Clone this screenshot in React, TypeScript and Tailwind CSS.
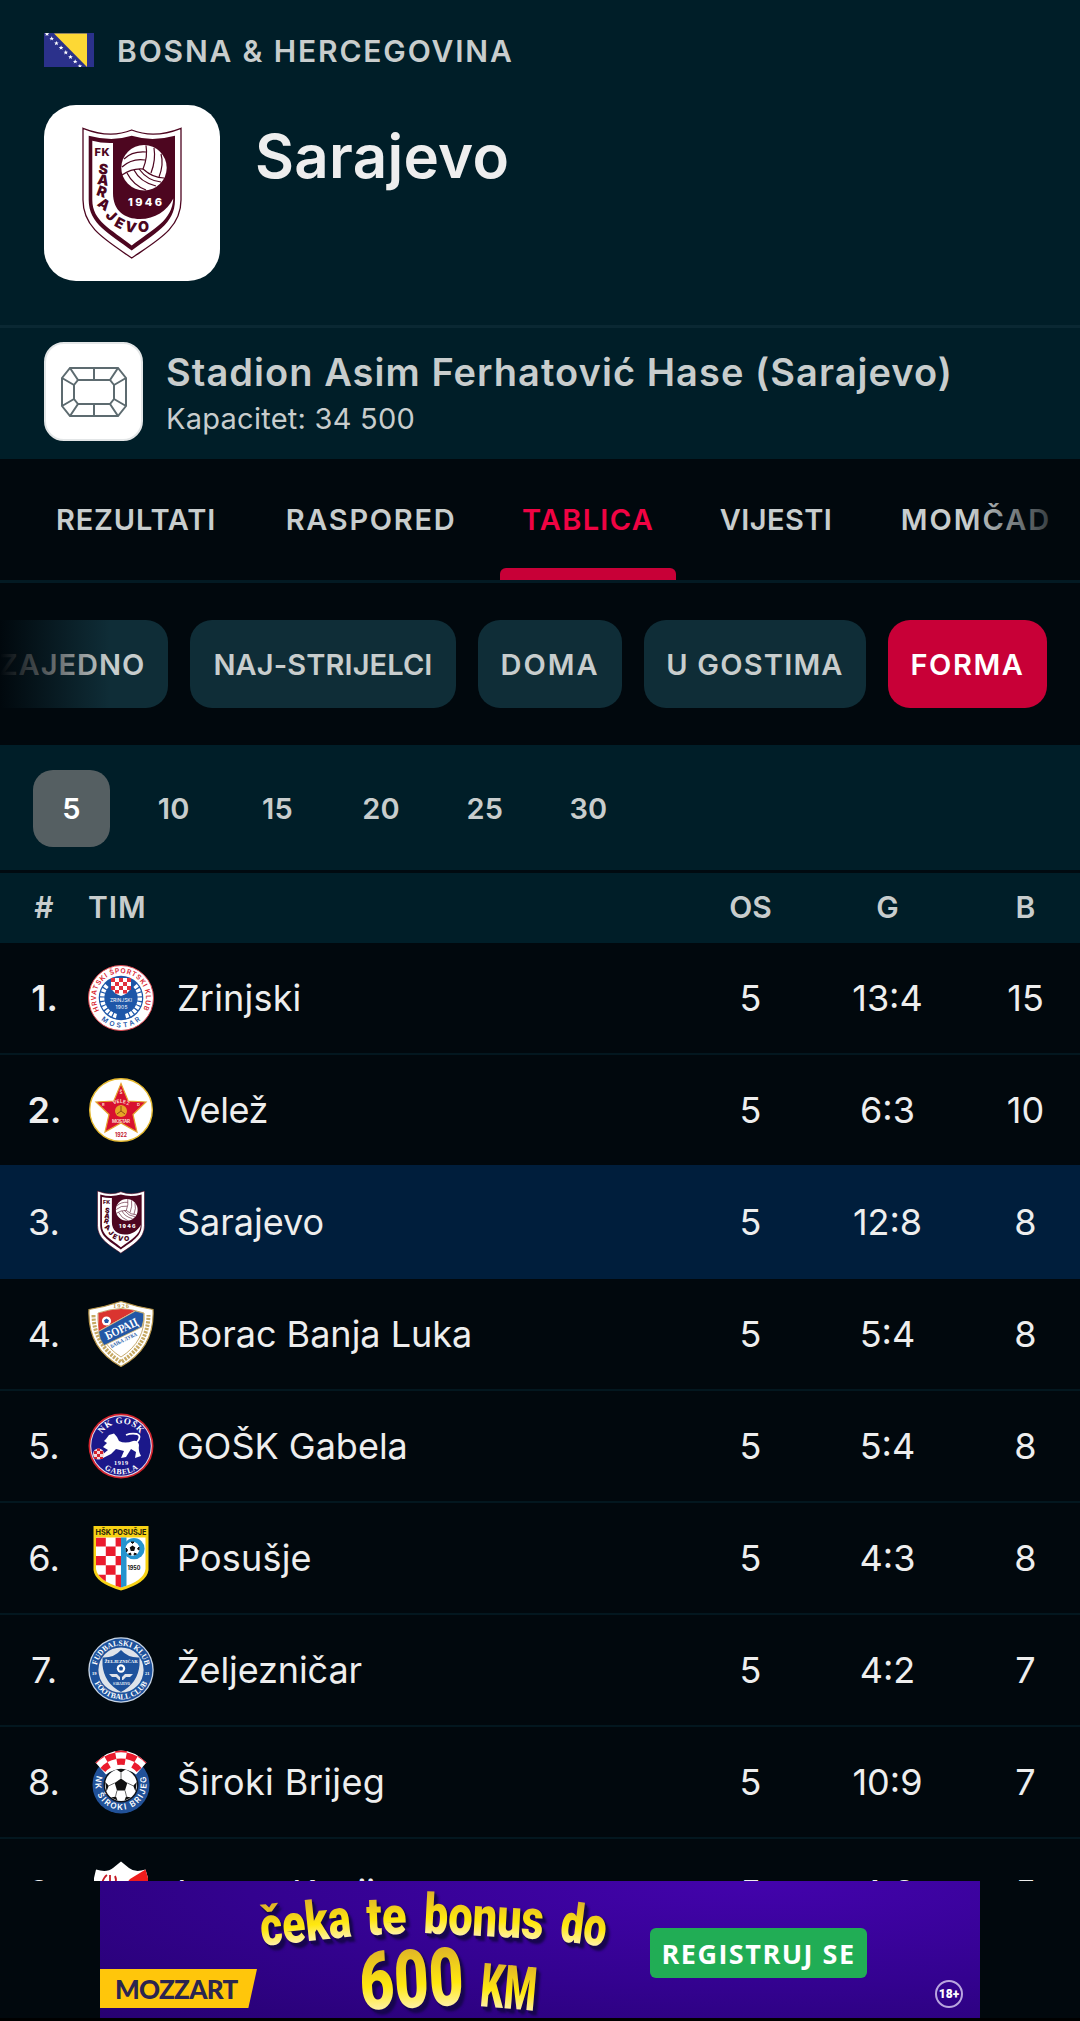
import { useState, type ReactNode } from "react";

type Team = {
  rank: number;
  name: string;
  played: number;
  goals: string;
  points: number;
  crest: ReactNode;
  tracking?: string;
};

const tabs = [
  { label: "REZULTATI", width: "w-[212px]", tracking: "tracking-[0.8px]" },
  { label: "RASPORED", width: "w-[214px]", tracking: "tracking-[1.7px]" },
  { label: "TABLICA", width: "w-[176px]", tracking: "tracking-[1.3px]" },
  { label: "VIJESTI", width: "w-[156px]", tracking: "tracking-[0.4px]" },
  { label: "MOMČAD", width: "w-[200px]", tracking: "tracking-[2px]" },
];

const filters = [
  { label: "ZAJEDNO", width: "w-[192px]", tracking: "tracking-[1px]" },
  { label: "NAJ-STRIJELCI", width: "w-[266px]", tracking: "tracking-[0.1px]" },
  { label: "DOMA", width: "w-[144px]", tracking: "tracking-[2px]" },
  { label: "U GOSTIMA", width: "w-[222px]", tracking: "tracking-[1.2px]" },
  { label: "FORMA", width: "w-[159px]", tracking: "tracking-[1.6px]" },
];

const formLengths = [5, 10, 15, 20, 25, 30];

function Flag() {
  return (
    <svg viewBox="0 0 50 34" className="h-[34px] w-[50px] shrink-0">
      <rect width="50" height="34" fill="#2b318b" />
      <path d="M10 0.5H43V34Z" fill="#fdd835" />
      {[0, 1, 2, 3, 4, 5, 6, 7].map((i) => (
        <path
          key={i}
          d="M0 -2.3L0.7 -0.7L2.3 -0.7L1 0.4L1.5 2L0 1L-1.5 2L-1 0.4L-2.3 -0.7L-0.7 -0.7Z"
          transform={`translate(${3 + i * 4.7} ${1 + i * 4.6})`}
          fill="#fff"
        />
      ))}
    </svg>
  );
}

function SarajevoCrest({ className }: { className: string }) {
  return (
    <svg viewBox="0 0 100 132" className={className} fontFamily="Inter, sans-serif" fontWeight="800">
      <path
        d="M1 1.3Q28 12 49.7 3Q72 12 99 1.3V73C99 101 76 113 49.7 131C24 113 1 101 1 73Z"
        fill="#fff"
        stroke="#4d0620"
        strokeWidth="1.3"
      />
      <path
        d="M6.7 8.7Q30 15 49.7 8.8Q70 15 93 8.7V73C93 97 72 107 49.7 123.5C28 107 6.7 97 6.7 73Z"
        fill="#4d0620"
      />
      <path
        d="M10.3 13.7Q20 16.5 31 16V66C31 84 43 92 58 92C73 92 85 84 91.3 71.5C90 94 71 102 49.7 118.5C29 102 10.3 94 10.3 73Z"
        fill="#fff"
      />
      <circle cx="62" cy="40.8" r="22.7" fill="#fff" />
      <g fill="none" stroke="#4d0620" strokeWidth="1.2">
        <path d="M64 18.5Q66 30 61 42Q71 51 82 51" />
        <path d="M72 21Q74 33 69 46" />
        <path d="M79 27Q82 37 77 50" />
        <path d="M61 42Q50 41 40 48" />
        <path d="M64 25Q50 24 42 32" />
        <path d="M63 33Q50 31 40 40" />
        <path d="M52 43Q58 55 74 59" />
        <path d="M45 46Q51 58 64 63" />
        <path d="M57 42Q66 54 79 55" />
      </g>
      <text x="46" y="79" fontSize="11" fill="#fff" textLength="34">1946</text>
      <text x="12.5" y="28.5" fontSize="11" fill="#4d0620" textLength="15">FK</text>
      <text
        x="16 14.8 13.8 14.5 22.8 31.4 42 56"
        y="46.4 57 67.8 78 89 98.6 103.4 105"
        rotate="8 10 20 36 45 28 15 0"
        fontSize="14.2"
        fontWeight="900"
        fill="#4d0620"
      >
        SARAJEVO
      </text>
    </svg>
  );
}

function ZrinjskiCrest() {
  return (
    <svg viewBox="0 0 66 66" className="size-[66px]" fontFamily="Inter, sans-serif" fontWeight="600">
      <defs>
        <path id="zrinjski-top" d="M11.3 45.5A25 25 0 1 1 54.7 45.5" />
        <path id="zrinjski-bottom" d="M10.4 52A29.7 29.7 0 0 0 55.6 52" />
      </defs>
      <circle cx="33" cy="33" r="32.5" fill="#fff" stroke="#d9464e" />
      <circle cx="33" cy="33" r="22.3" fill="#1d56a8" />
      <text fontSize="6.8" fill="#d8232f">
        <textPath href="#zrinjski-top" textLength="103">HRVATSKI ŠPORTSKI KLUB</textPath>
      </text>
      <text fontSize="6.8" fill="#1d56a8">
        <textPath href="#zrinjski-bottom" startOffset="4" textLength="43">MOSTAR</textPath>
      </text>
      <path
        d="M19 20.5A18.6 18.6 0 0 0 29 51.2M47 20.5A18.6 18.6 0 0 1 37 51.2"
        fill="none"
        stroke="#fff"
        strokeWidth="4.4"
        strokeDasharray="3.2 1.2"
      />
      <path d="M23 13H43V23Q41 28 33 31Q25 28 23 23Z" fill="#fff" />
      <g fill="#e0303c">
        <path d="M23 13h4v4h-4zM31 13h4v4h-4zM39 13h4v4h-4zM27 17h4v4h-4zM35 17h4v4h-4z" />
        <path d="M23 21h4v4h-4zM31 21h4v4h-4zM39 21h4v4h-4zM27 25h4v3.5h-4zM35 25h4v3.5h-4z" />
      </g>
      <text x="22" y="36.5" fontSize="5" fontWeight="400" fill="#fff" textLength="22">ZRINJSKI</text>
      <text x="27.5" y="43.5" fontSize="5" fontWeight="400" fill="#fff" textLength="12">1905</text>
    </svg>
  );
}

function VelezCrest() {
  return (
    <svg viewBox="0 0 66 66" className="size-[66px]" fontFamily="Inter, sans-serif" fontWeight="700">
      <circle cx="33" cy="33" r="31.3" fill="#fff" stroke="#e5b92f" strokeWidth="1.4" />
      <path
        d="M33 6.5L40.2 24L58 25L45 37.5L49 55L33 46L17 55L21 37.5L8 25L25.8 24Z"
        fill="#d8102f"
        stroke="#e5a52f"
        strokeWidth="1.2"
      />
      <circle cx="33" cy="34" r="6" fill="#e6a326" />
      <path d="M33 29V34L37 37M33 34L29 37" stroke="#8f4a12" fill="none" />
      <text
        x="25.5 28.7 32 34.8 38"
        y="27.5 26.3 25.8 26.2 27.4"
        rotate="-18 -8 0 8 16"
        fontSize="4.8"
        fill="#fbd7c8"
      >
        VELEŽ
      </text>
      <text x="24" y="46.3" fontSize="4.6" fill="#fbd7c8" textLength="18">MOSTAR</text>
      <text x="31.5" y="16.5" fontSize="4.5" fill="#fbd7c8">Š</text>
      <text x="14" y="29" fontSize="4" fill="#fbd7c8">R</text>
      <text x="49" y="29" fontSize="4" fill="#fbd7c8">D</text>
      <text x="27" y="60" fontSize="6.4" fill="#c2182f" textLength="12" lengthAdjust="spacingAndGlyphs">1922</text>
    </svg>
  );
}

function BoracCrest() {
  return (
    <svg viewBox="0 0 66 66" className="size-[66px]" fontFamily="Liberation Serif, serif" fontWeight="700">
      <path
        d="M1 8.5Q17 6 33 0.5Q49 6 65 8.5Q67 47 33 65.5Q-1 47 1 8.5Z"
        fill="#fff"
        stroke="#b9974b"
        strokeWidth="1.2"
      />
      <path d="M5.5 14Q6 44 33 61Q60 44 60.5 14" fill="none" stroke="#c6a862" strokeWidth="4" strokeDasharray="2.2 1.2" />
      <path d="M10 12Q22 8 33 7.5Q44 8 56 12Q58 40 33 56Q8 40 10 12Z" fill="#fff" stroke="#b9974b" strokeWidth="0.8" />
      <path d="M10.4 12.2Q22 8.4 33 8Q40 8.2 47 9.7L10.5 30Z" fill="#da3430" />
      <path d="M10.6 30.5L47.5 10L55.8 12.3Q56.3 19 54 26L16 44.5Q11 38 10.6 30.5Z" fill="#2257a6" stroke="#d3b66c" strokeWidth="0.8" />
      <circle cx="18.5" cy="20" r="4.6" fill="#fff" />
      <path d="M18.5 17.5L21 19.3L20 22H17L16 19.3Z" fill="#2257a6" />
      <text x="25" y="6.5" fontSize="6.5" fill="#b9974b" textLength="16">1926</text>
      <g transform="rotate(-26 33 28)">
        <text x="16" y="32" fontSize="12" fill="#fff" textLength="35" lengthAdjust="spacingAndGlyphs">БОРАЦ</text>
        <text x="16" y="41" fontSize="5.5" fill="#2257a6" textLength="29" lengthAdjust="spacingAndGlyphs">БАЊА ЛУКА</text>
      </g>
    </svg>
  );
}

function GoskCrest() {
  return (
    <svg viewBox="0 0 66 66" className="size-[66px]" fontFamily="Liberation Serif, serif" fontWeight="700">
      <defs>
        <path id="gosk-top" d="M12.5 23.5A22.6 22.6 0 0 1 53.5 23.5" />
        <path id="gosk-bottom" d="M12 52A28.3 28.3 0 0 0 54 52" />
      </defs>
      <circle cx="33" cy="33" r="32.5" fill="#d2222d" />
      <circle cx="33" cy="33" r="30.8" fill="#e4e0ee" />
      <circle cx="33" cy="33" r="29.8" fill="#1b188a" />
      <text fontSize="9" fill="#fff">
        <textPath href="#gosk-top" startOffset="3" textLength="45">NK GOŠK</textPath>
      </text>
      <text fontSize="7.8" fill="#fff">
        <textPath href="#gosk-bottom" startOffset="6" textLength="36">GABELA</textPath>
      </text>
      <path
        d="M18 26L21 22L26 20.5L29 24L31 28Q37 31 45 28Q50 27 51 32Q50 38 53 43L47 45L48 39L43 36L38 44L33 45L36 38L28 36L23 41L15 45L14 42L20 37L15 34L19 30L16 28Z"
        fill="#fff"
      />
      <path d="M49 29Q54 23 49 21Q43 20 38 22" fill="none" stroke="#fff" strokeWidth="1.8" />
      <circle cx="10.5" cy="41" r="5.5" fill="#f3d5d8" />
      <path d="M6 38h3v3H6zM12 38h3v3h-3zM9 35.5h3V38H9zM9 41h3v3H9zM6 44h3v2H6zM12 44h3v2h-3z" fill="#d2222d" />
      <text x="26" y="51.5" fontSize="6.2" fill="#fff" textLength="14">1919</text>
    </svg>
  );
}

function PosusjeCrest() {
  return (
    <svg viewBox="0 0 66 66" className="size-[66px]" fontFamily="Inter, sans-serif" fontWeight="700">
      <defs>
        <clipPath id="posusje-shield">
          <path d="M8 12.5H57.5V44Q56 56 33 62.5Q10 56 8 44Z" />
        </clipPath>
      </defs>
      <path d="M5.5 1H60.5V45Q59 58 33 65.5Q7 58 5.5 45Z" fill="#f8d214" />
      <g clipPath="url(#posusje-shield)">
        <rect x="8" y="12" width="50" height="52" fill="#fff" />
        <path
          d="M8 12.5h9.8v9H8zM27.6 12.5h5.4v9h-5.4zM17.8 21.5h9.8v9.4h-9.8zM8 30.9h9.8v9.4H8zM27.6 30.9h5.4v9.4h-5.4zM17.8 40.3h9.8v9.4h-9.8zM8 49.7h9.8v12H8zM27.6 49.7h5.4v14h-5.4z"
          fill="#ea1b2d"
        />
        <rect x="33" y="12" width="5.5" height="52" fill="#2594cf" />
      </g>
      <circle cx="46" cy="23.7" r="10.6" fill="#2594cf" />
      <circle cx="44.5" cy="23.7" r="7" fill="#fff" />
      <path d="M44.5 20.5L47.3 22.6L46.2 26H42.8L41.7 22.6Z" fill="#111" />
      <path d="M43 17l3 0-1.5 1.5zM38 23l1.5 2-1 2zM51 22l0 3-1.5-1zM40.5 29l2-1 .5 2zM48.5 29l-2-1-.5 2z" fill="#111" stroke="#111" />
      <text x="7.5" y="10" fontSize="8" fill="#26220c" textLength="51" lengthAdjust="spacingAndGlyphs">HŠK POSUŠJE</text>
      <text x="39.5" y="45.3" fontSize="5.6" fill="#111" textLength="13" lengthAdjust="spacingAndGlyphs">1950</text>
    </svg>
  );
}

function ZeljeznicarCrest() {
  return (
    <svg viewBox="0 0 66 66" className="size-[66px]" fontFamily="Liberation Serif, serif" fontWeight="700">
      <defs>
        <path id="zeljo-top" d="M8.9 28.7A24.5 24.5 0 0 1 57.1 28.7" />
        <path id="zeljo-bottom" d="M6.2 45A29.4 29.4 0 0 0 59.8 45" />
      </defs>
      <circle cx="33" cy="33" r="32.7" fill="#c9d6e6" />
      <circle cx="33" cy="33" r="31.4" fill="#1e529c" />
      <circle cx="33" cy="33" r="22.6" fill="#dfe3ea" />
      <path d="M14.5 20.5Q26 21 33 13Q40 21 51.5 20.5V28Q50 46 33 55Q16 46 14.5 28Z" fill="#1e529c" />
      <text fontSize="7.8" fill="#fff">
        <textPath href="#zeljo-top" startOffset="0.5" textLength="67" lengthAdjust="spacingAndGlyphs">FUDBALSKI KLUB</textPath>
      </text>
      <text fontSize="7.8" fill="#fff">
        <textPath href="#zeljo-bottom" startOffset="1" textLength="65" lengthAdjust="spacingAndGlyphs">FOOTBALL CLUB</textPath>
      </text>
      <text x="16.5" y="25.5" fontSize="4.8" fill="#fff" textLength="33" lengthAdjust="spacingAndGlyphs">ŽELJEZNIČAR</text>
      <circle cx="33" cy="31.5" r="4.2" fill="#fff" />
      <path d="M33 29.2L35.2 30.8L34.4 33.4H31.6L30.8 30.8Z" fill="#1e529c" />
      <path d="M21 37H29L32 40V43H31L28 40H24zM45 37H37L34 40V43H35L38 40H42z" fill="#dfe3ea" />
      <text x="25" y="47.5" fontSize="3.2" fill="#fff" textLength="17">SARAJEVO</text>
      <text x="4" y="37.5" fontSize="4.5" fill="#fff">19</text>
      <text x="57" y="37.5" fontSize="4.5" fill="#fff">21</text>
    </svg>
  );
}

function SirokiCrest() {
  return (
    <svg viewBox="0 0 66 66" className="size-[66px]" fontFamily="Inter, sans-serif" fontWeight="600">
      <defs>
        <path id="siroki-ring" d="M10.5 23A25.6 25.6 0 1 0 55.5 23" />
        <clipPath id="siroki-fan">
          <path d="M7.5 13.5Q33 -10.5 58.5 13.5L48 25.5Q33 14.5 18 25.5Z" />
        </clipPath>
      </defs>
      <circle cx="33" cy="36" r="28.5" fill="#215198" />
      <circle cx="33" cy="36" r="17.5" fill="#10141c" />
      {/* rings of checks share one centre, so the columns stay radial */}
      <g clipPath="url(#siroki-fan)">
        <rect width="66" height="28" fill="#fff" />
        <g fill="none" stroke="#ea1b2d" strokeWidth="6.4">
          <path d="M5.2 12.9A36.5 36.5 0 0 1 60.8 12.9" pathLength="5" strokeDasharray="1 1" />
          <path d="M10 17A30.1 30.1 0 0 1 56 17" pathLength="5" strokeDasharray="1 1" strokeDashoffset="1" />
          <path d="M14.9 21A23.7 23.7 0 0 1 51.1 21" pathLength="5" strokeDasharray="1 1" />
        </g>
      </g>
      <circle cx="33" cy="36" r="16" fill="#fff" />
      <path d="M33 29.5L39.3 34L37 41.5H29L26.7 34Z" fill="#111" />
      <path d="M28.5 20.6Q33 19 37.5 20.6L33 23.5ZM17.2 33L20.8 36.8L18.5 42.5ZM48.8 33L45.2 36.8L47.5 42.5ZM23 48.5L28 47.5L29.5 51.5ZM43 48.5L38 47.5L36.5 51.5Z" fill="#111" />
      <path d="M33 23.5V29.5M39.3 34L45.2 36.8M37 41.5L38.5 47.5M29 41.5L27.5 47.5M26.7 34L20.8 36.8" stroke="#444" strokeWidth="0.8" />
      <text fontSize="8.2" fill="#fff">
        <textPath href="#siroki-ring" startOffset="4" textLength="97">NK ŠIROKI BRIJEG</textPath>
      </text>
    </svg>
  );
}

function IgmanCrest() {
  return (
    <svg viewBox="0 0 66 66" className="size-[66px]">
      <path d="M8 9.5Q19 13 25 8L33 1.5L41 8Q47 13 57.5 9.5L60 18Q62 48 33 65Q4 48 6 18Z" fill="#fff" />
      <path d="M57.5 9.5L60 18Q62 48 33 65L20 45L42 19Z" fill="#ee1c1c" />
      <path d="M14 23Q16 17 19 15M22 15V22M27 16Q29 20 27 24" stroke="#c41c26" strokeWidth="1.8" fill="none" />
    </svg>
  );
}

const teams: Team[] = [
  { rank: 1, name: "Zrinjski", played: 5, goals: "13:4", points: 15, crest: <ZrinjskiCrest />, tracking: "tracking-[0.2px]" },
  { rank: 2, name: "Velež", played: 5, goals: "6:3", points: 10, crest: <VelezCrest />, tracking: "tracking-[-0.4px]" },
  { rank: 3, name: "Sarajevo", played: 5, goals: "12:8", points: 8, crest: <SarajevoCrest className="h-[64px] w-[48px]" /> },
  { rank: 4, name: "Borac Banja Luka", played: 5, goals: "5:4", points: 8, crest: <BoracCrest /> },
  { rank: 5, name: "GOŠK Gabela", played: 5, goals: "5:4", points: 8, crest: <GoskCrest /> },
  { rank: 6, name: "Posušje", played: 5, goals: "4:3", points: 8, crest: <PosusjeCrest />, tracking: "tracking-[0.2px]" },
  { rank: 7, name: "Željezničar", played: 5, goals: "4:2", points: 7, crest: <ZeljeznicarCrest />, tracking: "tracking-[-0.1px]" },
  { rank: 8, name: "Široki Brijeg", played: 5, goals: "10:9", points: 7, crest: <SirokiCrest />, tracking: "tracking-[0.4px]" },
  { rank: 9, name: "Igman Konjic", played: 5, goals: "4:8", points: 5, crest: <IgmanCrest /> },
];

function StadiumIcon() {
  return (
    <svg viewBox="0 0 66 50" className="h-[50px] w-[66px]" fill="none" stroke="#5d6b70" strokeWidth="2">
      <path d="M9 1H57L65 11V39L57 49H9L1 39V11Z" />
      <path d="M17 13H49L53 18V32L49 37H17L13 32V18Z" />
      <path d="M33 1V13M33 37V49M9 1L17 13M57 1L49 13M9 49L17 37M57 49L49 37M1 11L13 18M65 11L53 18M1 39L13 32M65 39L53 32" />
    </svg>
  );
}

function AdHeadline() {
  return (
    <svg
      viewBox="0 0 380 137"
      className="h-[137px] w-[380px] shrink-0"
      fontFamily="Roboto, sans-serif"
      fontWeight="900"
    >
      <defs>
        <linearGradient id="gold" x1="0" y1="0" x2="0" y2="1">
          <stop offset="0.1" stopColor="#d9ab2c" />
          <stop offset="0.55" stopColor="#ffe80f" />
          <stop offset="0.85" stopColor="#fff3c4" />
        </linearGradient>
      </defs>
      <g fill="url(#gold)" className="[filter:drop-shadow(2px_3px_0_#17054f)_drop-shadow(2px_2px_1px_#17054f)]">
        <text x="12" y="65" fontSize="55" textLength="91" lengthAdjust="spacingAndGlyphs" transform="rotate(-6 12 65)">čeka</text>
        <text x="117" y="54" fontSize="53" textLength="40" lengthAdjust="spacingAndGlyphs" transform="rotate(-2 117 54)">te</text>
        <text x="173" y="52" fontSize="56" textLength="120" lengthAdjust="spacingAndGlyphs" transform="rotate(3 173 52)">bonus</text>
        <text x="309" y="60" fontSize="55" textLength="46" lengthAdjust="spacingAndGlyphs" transform="rotate(7 309 60)">do</text>
        <text x="111" y="129" fontSize="81" textLength="104" lengthAdjust="spacingAndGlyphs" transform="rotate(-3 111 129)">600</text>
        <text x="229" y="125" fontSize="61" textLength="56" lengthAdjust="spacingAndGlyphs" transform="rotate(5 229 125)">KM</text>
      </g>
    </svg>
  );
}

function AdBanner() {
  return (
    <aside className="absolute inset-x-0 bottom-0 flex h-[140px] justify-center border-b-[3px] border-black bg-[#01080d]">
      <div className="flex h-[137px] w-[880px] overflow-hidden bg-[radial-gradient(ellipse_at_75%_0%,#4303ac_0%,#33028f_55%,#270172_100%)]">
        <div className="mb-[10px] flex h-[39px] w-[157px] shrink-0 items-center self-end bg-[#ffc60b] pl-[15px] [clip-path:polygon(0_0,100%_0,94.5%_100%,0_100%)]">
          <span className="font-[Lato] text-[26px] font-black leading-none tracking-[-0.7px] text-[#2b2550]">MOZZART</span>
        </div>
        <div className="-ml-[7px]">
          <AdHeadline />
        </div>
        <button className="ml-[20px] mt-[47px] h-[50px] w-[217px] shrink-0 rounded-[6px] bg-[#21ad55] font-['Open_Sans'] text-[27px] font-bold leading-none tracking-[1.5px] text-white">
          REGISTRUJ SE
        </button>
        <div className="mb-[10px] ml-auto mr-[17px] flex size-[28px] items-center justify-center self-end rounded-full border-2 border-[#b9a5df] font-[Roboto] text-[12px] font-black leading-none text-white">
          18+
        </div>
      </div>
    </aside>
  );
}

export default function App() {
  const [activeTab, setActiveTab] = useState("TABLICA");
  const [activeFilter, setActiveFilter] = useState("FORMA");
  const [formLength, setFormLength] = useState(5);

  return (
    <div className="relative h-[2021px] w-[1080px] overflow-hidden bg-[#01080d] font-[Inter,sans-serif] text-[#c8cdcd]">
      {/* Club header */}
      <header className="h-[325px] bg-[#001e28] px-[44px] pt-[33px]">
        <div className="flex h-[34px] items-center gap-[23px]">
          <Flag />
          <span className="pt-px text-[30px] font-semibold leading-none tracking-[1.85px]">BOSNA &amp; HERCEGOVINA</span>
        </div>
        <div className="mt-[38px] flex gap-[35px]">
          <div className="flex size-[176px] items-center justify-center rounded-[32px] bg-white">
            <SarajevoCrest className="h-[132px] w-[100px]" />
          </div>
          <h1 className="mt-[20px] text-[60px] font-semibold leading-[62px] tracking-[0.3px] text-[#eeeeee]">Sarajevo</h1>
        </div>
      </header>

      {/* Stadium */}
      <section className="flex h-[134px] gap-[23px] border-t-[3px] border-[#0a2833] bg-[#001e28] px-[44px] pt-[14px]">
        <div className="flex size-[99px] items-center justify-center rounded-[20px] border-2 border-[#e3e6e7] bg-white">
          <StadiumIcon />
        </div>
        <div className="pt-[7px]">
          <h2 className="text-[38px] font-semibold leading-[46px] tracking-[1.05px]">Stadion Asim Ferhatović Hase (Sarajevo)</h2>
          <p className="text-[29px] leading-[48px] tracking-[0.25px]">Kapacitet: 34 500</p>
        </div>
      </section>

      {/* Tabs */}
      <nav className="relative flex h-[124px] gap-[22px] overflow-hidden border-b-[3px] border-[#031a23] pl-[30px]">
        {tabs.map((tab) => (
          <button
            key={tab.label}
            onClick={() => setActiveTab(tab.label)}
            className={`flex shrink-0 flex-col items-center text-[29px] font-semibold leading-none ${tab.width} ${
              tab.label === activeTab ? "text-[#f00343]" : ""
            }`}
          >
            <span className={`pt-[46px] ${tab.tracking}`}>{tab.label}</span>
            {tab.label === activeTab && (
              <span className="mt-auto h-[12px] w-full rounded-t-[6px] bg-[#c80037]" />
            )}
          </button>
        ))}
        <div className="absolute inset-y-0 right-0 w-[110px] bg-gradient-to-r from-transparent to-[#01080d]" />
      </nav>

      {/* Table filters */}
      <div className="relative flex h-[162px] items-center justify-end gap-[22px] overflow-hidden pr-[33px]">
        {filters.map((filter) => (
          <button
            key={filter.label}
            onClick={() => setActiveFilter(filter.label)}
            className={`h-[88px] shrink-0 rounded-[22px] text-[29px] font-semibold leading-none ${filter.width} ${filter.tracking} ${
              filter.label === activeFilter ? "bg-[#c80037] text-white" : "bg-[#0f2d37]"
            }`}
          >
            {filter.label}
          </button>
        ))}
        <div className="absolute inset-y-0 left-0 w-[110px] bg-gradient-to-r from-[#01080d] to-transparent" />
      </div>

      {/* Number of matches */}
      <div className="flex h-[128px] items-center gap-[26.7px] border-b-[3px] border-[#010a10] bg-[#001e28] pl-[33px] pt-[2px]">
        {formLengths.map((length) => (
          <button
            key={length}
            onClick={() => setFormLength(length)}
            className={`h-[77px] w-[77px] rounded-[20px] text-[29px] font-semibold leading-none tracking-[0.2px] ${
              length === formLength ? "bg-[#555f62] text-white" : "pr-[3px]"
            }`}
          >
            {length}
          </button>
        ))}
      </div>

      {/* Standings */}
      <div className="flex h-[70px] items-center bg-[#001e28] pb-[2px] text-[30px] font-semibold leading-none">
        <span className="w-[88px] text-center">#</span>
        <span className="flex-1 tracking-[0.9px]">TIM</span>
        <span className="w-[137px] text-center">OS</span>
        <span className="w-[137px] text-center">G</span>
        <span className="w-[139px] text-center">B</span>
        <span className="-mr-[30px] w-[15px]" />
      </div>
      {teams.map((team, index) => (
        <div
          key={team.rank}
          className={`flex h-[112px] items-center border-b-2 text-[36px] leading-none text-[#eeeeee] last-of-type:pb-[3px] ${
            team.name === "Sarajevo" ? "bg-[#001e3c]" : ""
          } ${
            team.name === "Sarajevo" || teams[index + 1]?.name === "Sarajevo" ? "border-[#001e3c]" : "border-[#03171f]"
          }`}
        >
          <span className={`w-[88px] text-center ${team.rank <= 2 ? "pl-px font-semibold" : ""}`}>{team.rank}.</span>
          <span className="flex w-[66px] shrink-0 justify-center">{team.crest}</span>
          <span className={`flex-1 pl-[23px] ${team.tracking ?? ""}`}>{team.name}</span>
          <span className="w-[137px] text-center">{team.played}</span>
          <span className="w-[137px] text-center">{team.goals}</span>
          <span className="w-[139px] text-center">{team.points}</span>
          <span className="-mr-[30px] w-[15px]" />
        </div>
      ))}

      <AdBanner />
    </div>
  );
}
